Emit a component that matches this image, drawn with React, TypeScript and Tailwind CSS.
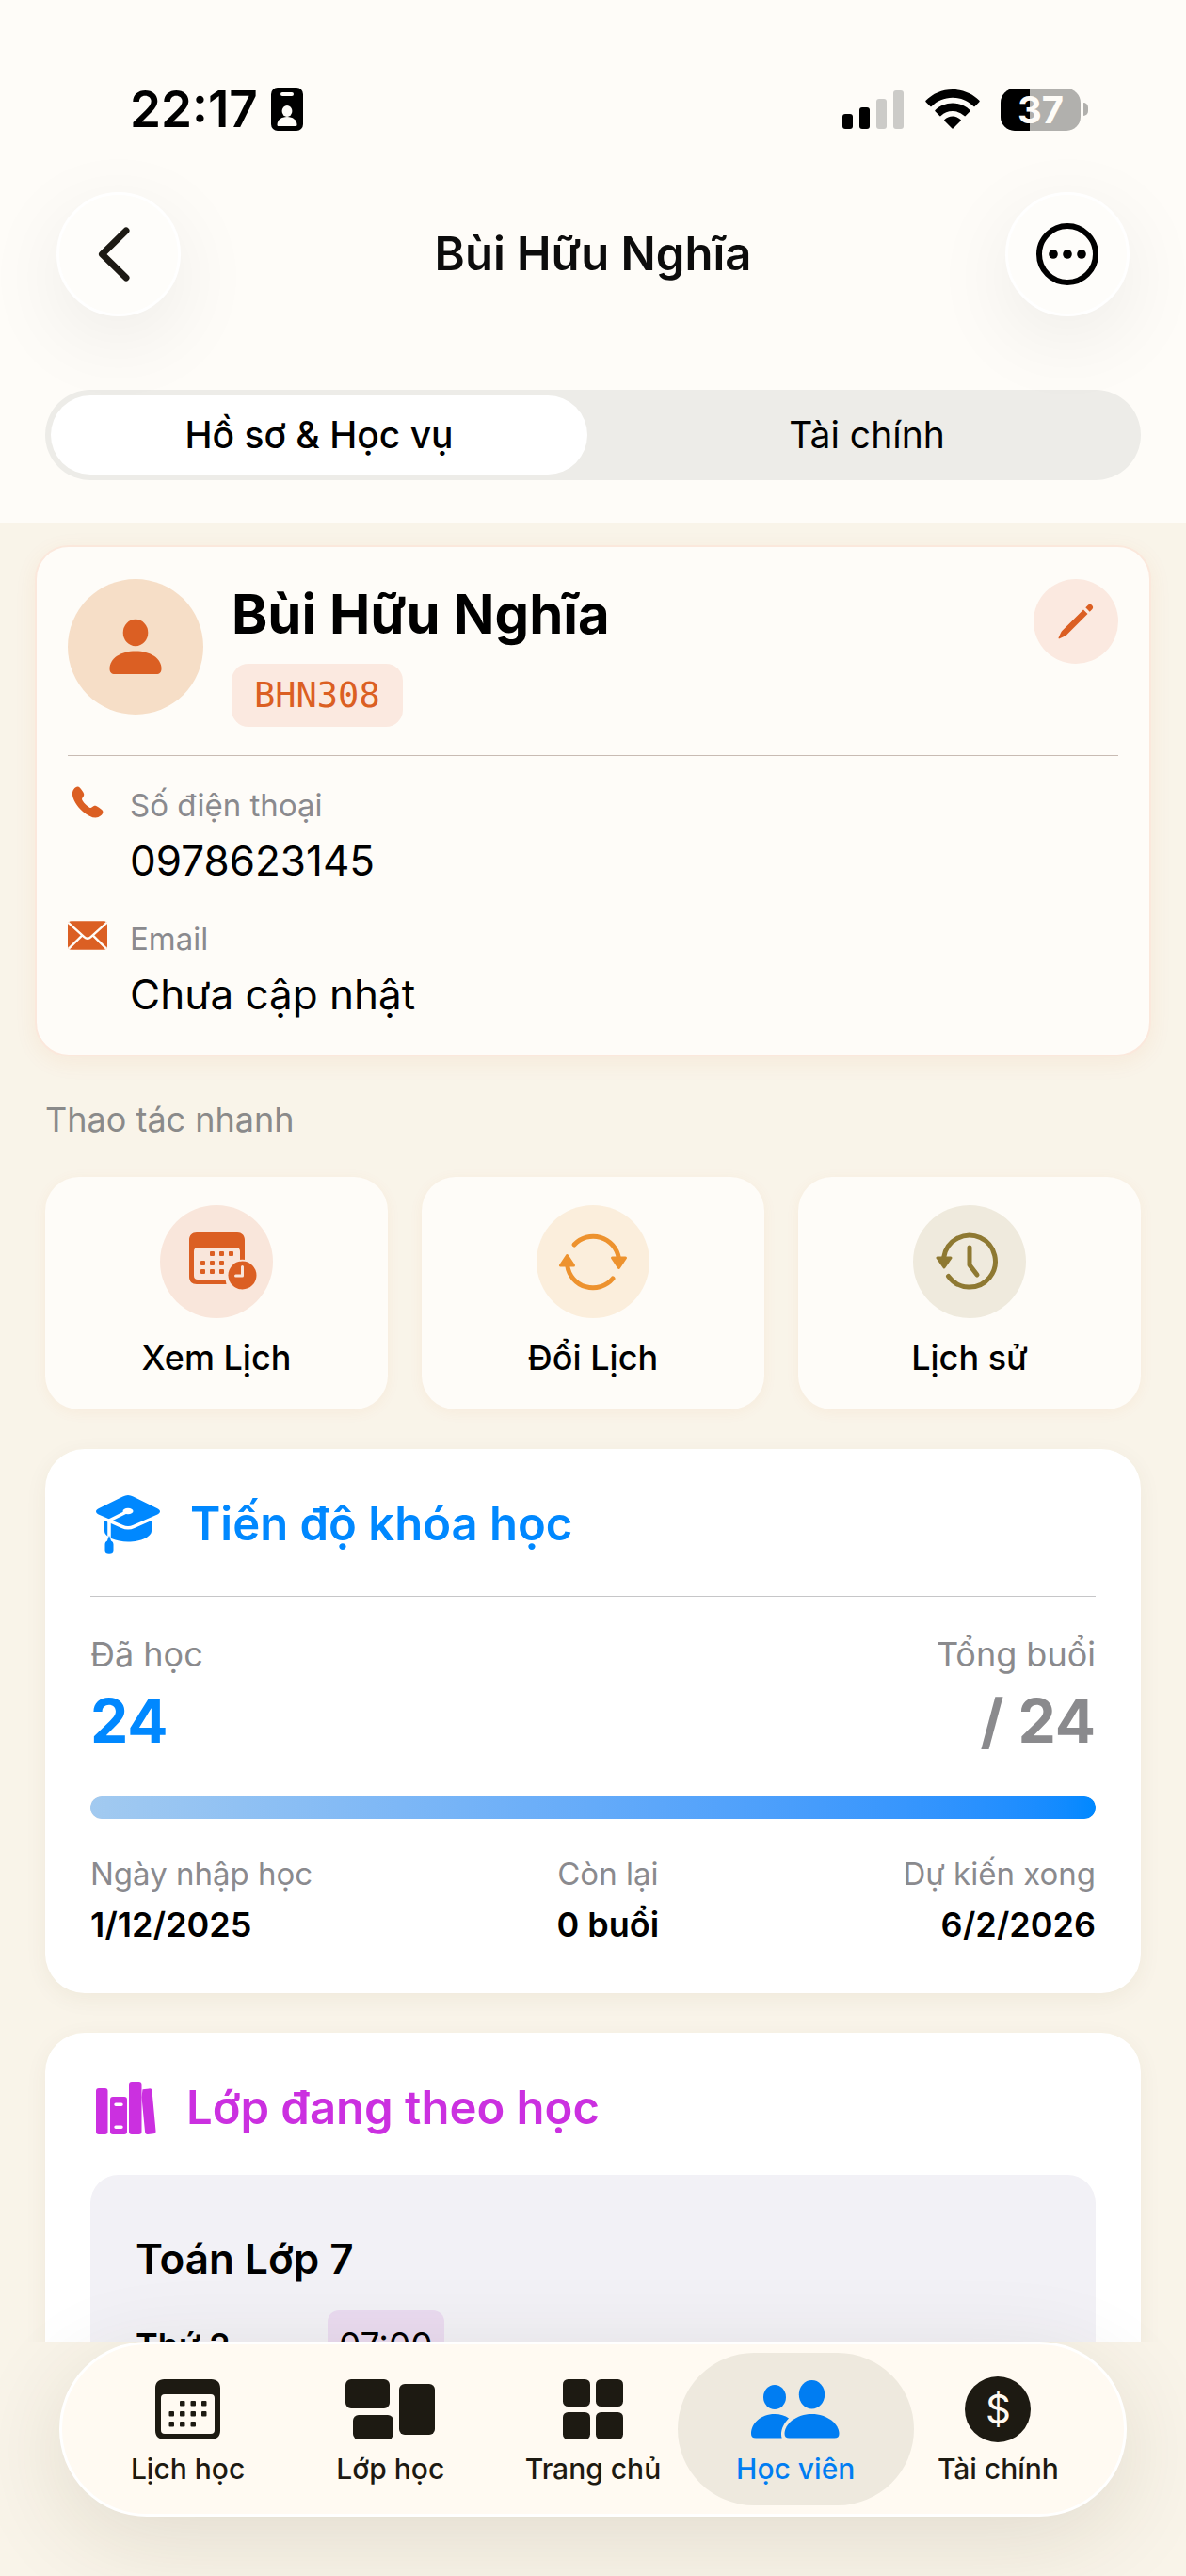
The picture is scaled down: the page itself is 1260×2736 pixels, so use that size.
import { useState } from "react";
import type { ReactNode } from "react";

type Tab = "profile" | "finance";

type QuickAction = {
  label: string;
  tint: string;
  icon: ReactNode;
};

type NavItem = {
  label: string;
  href: string;
  icon: ReactNode;
};

function BadgeIcon() {
  return (
    <svg width="34" height="46" viewBox="0 0 34 46" aria-hidden="true">
      <rect width="34" height="46" rx="7" fill="#000" />
      <rect x="10" y="5" width="14" height="4" rx="2" fill="#fefcf8" />
      <ellipse cx="17" cy="25" rx="5.4" ry="6" fill="#fefcf8" />
      <path d="M6.5 39.5c0-5 4.5-8.5 10.500-8.500s10.500 3.500 10.500 8.500c0 1-.6 1.500-1.500 1.500H8c-.9 0-1.500-.5-1.500-1.500z" fill="#fefcf8" />
    </svg>
  );
}

function SignalIcon() {
  return (
    <svg width="66" height="42" viewBox="0 0 66 42" aria-hidden="true">
      <rect x="0" y="26" width="11" height="16" rx="3" fill="#000" />
      <rect x="18" y="19" width="11" height="23" rx="3" fill="#000" />
      <rect x="36" y="10" width="11" height="32" rx="3" fill="#cccbc8" />
      <rect x="54" y="1" width="11" height="41" rx="3" fill="#cccbc8" />
    </svg>
  );
}

function WifiIcon() {
  return (
    <svg width="58" height="42" viewBox="0 0 58 42" aria-hidden="true" fill="#000">
      <path d="M29 0C17.800 0 7.800 4.500.6 11.800a1 1 0 0 0 0 1.400l4.700 4.700c.4.400 1 .4 1.400 0C12.400 12.200 20.200 8.700 29 8.700s16.600 3.500 22.300 9.200c.4.400 1 .4 1.400 0l4.700-4.700a1 1 0 0 0 0-1.400C50.200 4.500 40.200 0 29 0z" />
      <path d="M29 14.500c-7.200 0-13.700 2.800-18.500 7.400a1 1 0 0 0 0 1.400l4.700 4.800c.4.400 1 .4 1.400 0a17.800 17.800 0 0 1 24.800 0c.4.400 1 .4 1.400 0l4.700-4.800a1 1 0 0 0 0-1.400c-4.800-4.600-11.300-7.400-18.500-7.400z" />
      <path d="M29 28.500c-3.300 0-6.300 1.300-8.500 3.400a1 1 0 0 0 0 1.500l7.700 7.900c.5.500 1.100.5 1.600 0l7.700-7.900a1 1 0 0 0 0-1.500c-2.200-2.100-5.200-3.400-8.500-3.400z" />
    </svg>
  );
}

function Battery({ level }: { level: number }) {
  return (
    <div className="flex items-center gap-[3px]">
      <div className="relative flex h-[45px] w-[85px] items-center justify-center rounded-[15px] bg-[#b1b0ad]">
        <div className="absolute inset-y-0 left-0 rounded-l-[15px] bg-black" style={{ width: `${level}%` }} />
        <span className="relative text-[40px] leading-[45px] font-bold text-[#fefcf8]">{level}</span>
      </div>
      <div className="h-[14px] w-[5px] rounded-r-full bg-[#b1b0ad]" />
    </div>
  );
}

function PersonIcon() {
  return (
    <svg width="56" height="60" viewBox="0 0 56 60" fill="#db5f23" aria-hidden="true">
      <ellipse cx="28" cy="15" rx="13.300" ry="14.200" />
      <path d="M0.500 53C0.500 42.500 12 34.500 28 34.500S55.500 42.500 55.500 53c0 4-1.800 6-5.500 6H6c-3.700 0-5.500-2-5.500-6z" />
    </svg>
  );
}

function PencilIcon() {
  return (
    <svg width="38" height="38" viewBox="0 0 38 38" fill="#db5f23" aria-hidden="true">
      <path d="M27 6.500 31.500 11 9 33.500c-.6.600-1.200 1-2 1.300L1.600 37.300c-.8.300-1.300-.2-1-1L3 31c.3-.8.700-1.400 1.300-2z" />
      <path d="m29.300 4.300 2.500-2.500c1.200-1.200 2.900-1.300 4-.2l.6.600c1.100 1.100 1 2.800-.2 4l-2.500 2.500z" />
    </svg>
  );
}

function PhoneIcon() {
  return (
    <svg width="34" height="34" viewBox="0 0 34 34" fill="#db5f23" aria-hidden="true">
      <path d="M2.400 3.200C4.300.9 6.800-.4 8.700 1.600c1.700 1.900 3.700 4.600 4.300 6.200.6 1.900-.2 3-1.300 4.400-.9 1.100-.8 1.800-.1 3 1.800 3 4.300 5.400 7.200 7.200 1.200.7 1.900.8 3-.1 1.400-1.100 2.500-1.900 4.400-1.300 1.600.6 4.300 2.600 6.200 4.300 2 1.900.7 4.400-1.600 6.300-4.500 3.900-11.500 1.500-18.800-4.700C3.600 19.600-1.900 8.600 2.400 3.200z" />
    </svg>
  );
}

function MailIcon() {
  return (
    <svg width="43" height="31" viewBox="0 0 43 31" aria-hidden="true">
      <rect width="43" height="31" rx="4" fill="#db5f23" />
      <path d="M0.500 1.500 17.800 17.200c2.300 2.100 5.100 2.100 7.400 0L42.500 1.500M1 30l14.500-14.300M42 30 27.500 15.700" fill="none" stroke="#fefcf8" strokeWidth="2.400" />
    </svg>
  );
}

// The calendar page is centred in its circle, the clock hangs over the corner
function CalendarClockIcon() {
  return (
    <svg width="86" height="62" viewBox="-14 0 86 62" fill="#db5f23" aria-hidden="true">
      <path fillRule="evenodd" d="M8 0h43c5 0 8 3 8 8v22a19 19 0 0 0-5-.5V20c0-2.500-1.500-4-4-4H9c-2.500 0-4 1.500-4 4v26c0 2.500 1.500 4 4 4h29.500l1 5H8c-5 0-8-3-8-8V8c0-5 3-8 8-8z" />
      {[22, 32, 42].map((x) => <rect key={`a${x}`} x={x} y="20" width="5" height="5" rx="1" />)}
      {[12, 22, 32].map((x) => <rect key={`b${x}`} x={x} y="30" width="5" height="5" rx="1" />)}
      {[12, 22, 32].map((x) => <rect key={`c${x}`} x={x} y="39" width="5" height="5" rx="1" />)}
      <circle cx="56.500" cy="45.500" r="16.800" fill="#f9e6db" />
      <circle cx="56.500" cy="45.500" r="15" />
      <path d="M56.500 36.500v9.500h-7" fill="none" stroke="#f9e6db" strokeWidth="3" strokeLinecap="round" strokeLinejoin="round" />
    </svg>
  );
}

function SwapIcon() {
  return (
    <svg width="72" height="62" viewBox="0 0 72 62" fill="none" stroke="#ed922e" strokeWidth="5" strokeLinecap="round" aria-hidden="true">
      <path d="M16 13A27.500 27.500 0 0 1 63.300 27" />
      <path d="M8.700 35A27.500 27.500 0 0 0 57 49" />
      <path d="M56.500 27h14L63.500 37.500z" fill="#ed922e" strokeWidth="3" strokeLinejoin="round" />
      <path d="M1.500 35h14L8.500 24.500z" fill="#ed922e" strokeWidth="3" strokeLinejoin="round" />
    </svg>
  );
}

function HistoryIcon() {
  return (
    <svg width="72" height="62" viewBox="0 0 72 62" fill="none" stroke="#8e7932" strokeWidth="5" strokeLinecap="round" strokeLinejoin="round" aria-hidden="true">
      <path d="M8.800 26A27.500 27.500 0 1 1 13.500 46.500" />
      <path d="M2 27h14L9 37z" fill="#8e7932" strokeWidth="3" />
      <path d="M36 16v18.500l8 10.500" />
    </svg>
  );
}

function GradCapIcon() {
  return (
    <svg width="68" height="62" viewBox="0 0 68 62" fill="#0088ff" aria-hidden="true">
      <path d="M9 24h50v14c0 6-11 11.500-25 11.500-6.500 0-12.500-1.200-17-3.200C12 44 9 41.500 9 38z" />
      <path d="M28.500 1.600c3.700-2 7.300-2 11 0l25.800 12.600c3.600 1.800 3.600 4.400 0 6.200L39.500 31.800c-3.700 1.700-7.300 1.700-11 0L2.700 20.400c-3.600-1.800-3.600-4.400 0-6.200z" stroke="#fff" strokeWidth="7" paintOrder="stroke" strokeLinejoin="round" />
      <path d="M32 18 14 27v18" fill="none" stroke="#fff" strokeWidth="3.500" strokeLinecap="round" strokeLinejoin="round" />
      <ellipse cx="34" cy="17" rx="5.500" ry="3.300" fill="#fff" />
      <path d="M14 43c1.200 2.500 1.500 3.500 2 5.500 1.700.8 2.500 2 2.500 4v6c0 2-1.500 3.300-4.500 3.300s-4.500-1.300-4.500-3.300v-6c0-2 .8-3.200 2.500-4 .5-2 .8-3 2-5.500z" />
    </svg>
  );
}

function BooksIcon() {
  return (
    <svg width="64" height="56" viewBox="0 0 64 56" fill="#cb30e0" aria-hidden="true">
      <rect x="0" y="7" width="12.500" height="49" rx="3" />
      <path fillRule="evenodd" d="M18 16h12a3 3 0 0 1 3 3v34a3 3 0 0 1-3 3H18a3 3 0 0 1-3-3V19a3 3 0 0 1 3-3zm3 6.500a1.700 1.700 0 0 0 0 3.400h6a1.700 1.700 0 0 0 0-3.400zm0 24a1.700 1.700 0 0 0 0 3.400h6a1.700 1.700 0 0 0 0-3.400z" />
      <rect x="35" y="0" width="13.500" height="56" rx="3" />
      <path d="m49.500 8.200 7-.8c1.800-.2 2.800.6 3 2.300l4 42.500c.2 1.800-.6 2.800-2.400 3l-6 .7c-1.800.2-2.800-.6-3-2.300l-3.600-37z" />
    </svg>
  );
}

function CalendarIcon() {
  return (
    <svg width="69" height="64" viewBox="0 0 69 64" fill="#1d1a12" aria-hidden="true">
      <path fillRule="evenodd" d="M9.500 0h50c6 0 9.500 3.500 9.500 9.500v45c0 6-3.500 9.500-9.500 9.500h-50C3.500 64 0 60.500 0 54.500v-45C0 3.500 3.500 0 9.500 0zM10 16c-2.700 0-4 1.300-4 4v34c0 2.700 1.300 4 4 4h49c2.700 0 4-1.300 4-4V20c0-2.700-1.300-4-4-4z" />
      {[26, 37.500, 49].map((x) => <rect key={`a${x}`} x={x} y="23" width="5.500" height="5.500" rx="1" />)}
      {[14.500, 26, 37.500, 49].map((x) => <rect key={`b${x}`} x={x} y="34" width="5.500" height="5.500" rx="1" />)}
      {[14.500, 26, 37.500].map((x) => <rect key={`c${x}`} x={x} y="45" width="5.500" height="5.500" rx="1" />)}
    </svg>
  );
}

function ClassIcon() {
  return (
    <svg width="95" height="64" viewBox="0 0 95 64" fill="#1d1a12" aria-hidden="true">
      <rect x="0" y="0" width="47" height="31" rx="6" />
      <rect x="8" y="38" width="43" height="26" rx="6" />
      <rect x="57" y="5" width="38" height="54" rx="6" />
    </svg>
  );
}

function GridIcon() {
  return (
    <svg width="64" height="64" viewBox="0 0 64 64" fill="#1d1a12" aria-hidden="true">
      <rect x="0" y="0" width="29" height="29" rx="5.500" />
      <rect x="35" y="0" width="29" height="29" rx="5.500" />
      <rect x="0" y="35" width="29" height="29" rx="5.500" />
      <rect x="35" y="35" width="29" height="29" rx="5.500" />
    </svg>
  );
}

function PeopleIcon() {
  return (
    <svg width="94" height="62" viewBox="0 0 94 62" fill="#007df2" aria-hidden="true">
      <ellipse cx="25" cy="18" rx="12" ry="13" />
      <path d="M25 36c6 0 11 1.500 15 4.500-5 5-8 11-8 17 0 1.500.2 2.900.7 4H5c-3.300 0-5-1.500-5-4.500C0 46 10 36 25 36z" />
      <ellipse cx="64.500" cy="15.300" rx="13.700" ry="15.200" />
      <path d="M64.500 36C81 36 93.500 46.500 93.500 57c0 3-1.700 4.500-5 4.500h-48c-3.300 0-5-1.500-5-4.500C35.500 46.500 48 36 64.500 36z" />
    </svg>
  );
}

function DollarIcon() {
  return (
    <span className="flex size-[70px] items-center justify-center rounded-full bg-[#1d1a12] text-[42px] leading-[70px] text-[#fffaf2]">
      $
    </span>
  );
}

const ACTIONS: QuickAction[] = [
  { label: "Xem Lịch", tint: "bg-[#f9e6db]", icon: <CalendarClockIcon /> },
  { label: "Đổi Lịch", tint: "bg-[#fbeedc]", icon: <SwapIcon /> },
  { label: "Lịch sử", tint: "bg-[#efeadd]", icon: <HistoryIcon /> },
];

const NAV_ITEMS: NavItem[] = [
  { label: "Lịch học", href: "#schedule", icon: <CalendarIcon /> },
  { label: "Lớp học", href: "#classes", icon: <ClassIcon /> },
  { label: "Trang chủ", href: "#home", icon: <GridIcon /> },
  { label: "Học viên", href: "#students", icon: <PeopleIcon /> },
  { label: "Tài chính", href: "#finance", icon: <DollarIcon /> },
];

const student = {
  name: "Bùi Hữu Nghĩa",
  code: "BHN308",
  phone: "0978623145",
  email: "Chưa cập nhật",
  done: 24,
  total: 24,
  startDate: "1/12/2025",
  remaining: "0 buổi",
  endDate: "6/2/2026",
};

function ContactRow({ icon, label, value }: { icon: ReactNode; label: string; value: string }) {
  return (
    <div className="flex items-start gap-6">
      <div className="flex h-[31px] w-[42px] items-center justify-center">{icon}</div>
      <dl>
        <dt className="text-[33px] leading-[39px] text-[#8a8a8e]">{label}</dt>
        <dd className="mt-3 text-[44px] leading-[54px]">{value}</dd>
      </dl>
    </div>
  );
}

export default function App() {
  const [tab, setTab] = useState<Tab>("profile");
  const [activeNav, setActiveNav] = useState("Học viên");

  const tabClass = (value: Tab) =>
    tab === value
      ? "rounded-full bg-white font-medium"
      : "rounded-full font-normal";

  return (
    <div className="flex h-screen flex-col bg-[#f9f4e9] font-['Inter','Noto_Sans',sans-serif] text-black">
      {/* Status bar + title */}
      <header className="bg-[#fefcf8] pb-[45px]">
        <div className="flex items-center justify-between pt-[90px] pr-[104px] pl-[138px]">
          <div className="flex items-center gap-[14px]">
            <span className="text-[53px] leading-[52px] font-semibold">22:17</span>
            <BadgeIcon />
          </div>
          <div className="flex items-center gap-[22px]">
            <SignalIcon />
            <WifiIcon />
            <Battery level={37} />
          </div>
        </div>

        <div className="mt-[62px] flex items-center justify-between px-[60px]">
          <button aria-label="Quay lại" className="flex size-[132px] items-center justify-center rounded-full border-[3px] border-white bg-[#fefdfa] shadow-[0_24px_90px_rgba(0,0,0,0.07)]">
            <svg width="34" height="58" viewBox="0 0 34 58" fill="none" stroke="#1d1a14" strokeWidth="7" strokeLinecap="round" strokeLinejoin="round" className="mr-[10px]" aria-hidden="true">
              <path d="M30 4 4.500 29 30 54" />
            </svg>
          </button>
          <h1 className="text-[49px] leading-[60px] font-semibold text-[#0c0c0c]">{student.name}</h1>
          <button aria-label="Tùy chọn" className="flex size-[132px] items-center justify-center rounded-full border-[3px] border-white bg-[#fefdfa] shadow-[0_24px_90px_rgba(0,0,0,0.07)]">
            <svg width="66" height="66" viewBox="0 0 66 66" aria-hidden="true">
              <circle cx="33" cy="33" r="30" fill="none" stroke="#000" strokeWidth="6" />
              <circle cx="18" cy="33" r="4.800" />
              <circle cx="33" cy="33" r="4.800" />
              <circle cx="48" cy="33" r="4.800" />
            </svg>
          </button>
        </div>

        <div role="tablist" className="mx-12 mt-[78px] grid h-24 grid-cols-2 gap-3 rounded-full bg-[#edece8] p-[6px] text-[39px]">
          <button role="tab" aria-selected={tab === "profile"} onClick={() => setTab("profile")} className={tabClass("profile")}>
            Hồ sơ &amp; Học vụ
          </button>
          <button role="tab" aria-selected={tab === "finance"} onClick={() => setTab("finance")} className={tabClass("finance")}>
            Tài chính
          </button>
        </div>
      </header>

      <main className="min-h-0 flex-1 overflow-hidden pt-6">
        {/* Profile */}
        <section className="mx-[37px] rounded-[36px] border-2 border-[#fbe8dc] bg-[#fefcf8] px-[33px] pt-[34px] pb-[37px] shadow-[0_6px_24px_rgba(219,95,35,0.07)]">
          <div className="flex items-start">
            <div className="flex size-36 items-center justify-center rounded-full bg-[#f6dec7]">
              <PersonIcon />
            </div>
            <div className="ml-[30px] flex-1">
              <h2 className="text-[58px] leading-[74px] font-bold">{student.name}</h2>
              <span className="mt-4 inline-block rounded-[18px] bg-[#fbe9e0] px-6 font-['DejaVu_Sans_Mono',monospace] text-[37px] leading-[67px] text-[#db5f23]">
                {student.code}
              </span>
            </div>
            <button aria-label="Chỉnh sửa" className="flex size-[90px] items-center justify-center rounded-full bg-[#fbe9e0]">
              <PencilIcon />
            </button>
          </div>
          <hr className="mt-[30px] border-[#c8bbb3]" />
          <div className="mt-[33px] flex flex-col gap-[37px]">
            <ContactRow icon={<PhoneIcon />} label="Số điện thoại" value={student.phone} />
            <ContactRow icon={<MailIcon />} label="Email" value={student.email} />
          </div>
        </section>

        {/* Quick actions */}
        <section className="mx-12 mt-[45px]">
          <h3 className="text-[36px] leading-[45px] text-[#8a8a8a]">Thao tác nhanh</h3>
          <div className="mt-[38px] grid grid-cols-3 gap-9">
            {ACTIONS.map((action) => (
              <button key={action.label} className="flex flex-col items-center rounded-[36px] bg-[#fefcf8] pt-[30px] pb-[33px] shadow-[0_3px_15px_rgba(219,95,35,0.06)]">
                <span className={`flex size-[120px] items-center justify-center rounded-full ${action.tint}`}>{action.icon}</span>
                <span className="mt-5 text-[36px] leading-[44px] font-medium">{action.label}</span>
              </button>
            ))}
          </div>
        </section>

        {/* Course progress */}
        <section className="mx-12 mt-[42px] rounded-[42px] bg-white px-12 pt-12 pb-[51px] shadow-[0_6px_24px_rgba(80,60,0,0.06)]">
          <div className="flex items-center gap-8 pl-[6px]">
            <GradCapIcon />
            <h3 className="text-[49px] leading-[64px] font-semibold text-[#0088ff]">Tiến độ khóa học</h3>
          </div>
          <hr className="mt-[44px] border-[#c6c6c8]" />
          <div className="mt-10 flex justify-between text-[#8a8a8d]">
            <div>
              <p className="text-[36px] leading-[42px]">Đã học</p>
              <p className="mt-[11px] text-[64px] leading-[78px] font-bold text-[#0088ff]">{student.done}</p>
            </div>
            <div className="text-right">
              <p className="text-[36px] leading-[42px]">Tổng buổi</p>
              <p className="mt-[11px] text-[64px] leading-[78px] font-bold">/ {student.total}</p>
            </div>
          </div>
          <div role="progressbar" aria-label="Tiến độ" aria-valuenow={student.done} aria-valuemax={student.total} className="mt-[41px] h-6 overflow-hidden rounded-full bg-[#e5e5ea]">
            <div className="h-full rounded-full bg-linear-to-r from-[#a2caf0] to-[#0088ff]" style={{ width: `${(student.done / student.total) * 100}%` }} />
          </div>
          <dl className="mt-[38px] flex justify-between">
            <div>
              <dt className="text-[33px] leading-[40px] text-[#8a8a8e]">Ngày nhập học</dt>
              <dd className="mt-3 text-[36px] leading-[44px] font-semibold">{student.startDate}</dd>
            </div>
            <div className="text-center">
              <dt className="text-[33px] leading-[40px] text-[#8a8a8e]">Còn lại</dt>
              <dd className="mt-3 text-[36px] leading-[44px] font-semibold">{student.remaining}</dd>
            </div>
            <div className="text-right">
              <dt className="text-[33px] leading-[40px] text-[#8a8a8e]">Dự kiến xong</dt>
              <dd className="mt-3 text-[36px] leading-[44px] font-semibold">{student.endDate}</dd>
            </div>
          </dl>
        </section>

        {/* Current classes */}
        <section className="mx-12 mt-[42px] rounded-[42px] bg-white p-12 shadow-[0_6px_24px_rgba(80,60,0,0.06)]">
          <div className="flex items-center gap-8 pl-[6px]">
            <BooksIcon />
            <h3 className="text-[49px] leading-[64px] font-semibold text-[#cb30e0]">Lớp đang theo học</h3>
          </div>
          <div className="mt-[39px] rounded-[30px] bg-[#f2f1f6] px-12 pt-[62px] pb-12">
            <h4 className="text-[44px] leading-[54px] font-semibold">Toán Lớp 7</h4>
            <div className="mt-7 flex items-center">
              <span className="w-[204px] text-[36px] leading-[44px] font-semibold">Thứ 2</span>
              <span className="rounded-[12px] bg-[#eadbf0] px-3 text-[37px] leading-[74px]">07:00</span>
            </div>
          </div>
        </section>
      </main>

      {/* Bottom nav */}
      <footer className="relative z-10 px-[63px] pb-[63px]">
        <nav className="grid h-[186px] grid-cols-5 rounded-full border-[3px] border-white bg-[#fffaf2] px-[26px] py-[9px] shadow-[0_24px_100px_rgba(60,50,20,0.12)]">
          {NAV_ITEMS.map((item) => (
            <a
              key={item.label}
              href={item.href}
              onClick={() => setActiveNav(item.label)}
              className={
                activeNav === item.label
                  ? "-mx-[18px] flex flex-col items-center rounded-full bg-[#eee9de] pt-[22px] text-[#007df2]"
                  : "flex flex-col items-center pt-[22px] text-[#1d1a12]"
              }
            >
              <span className="flex h-[76px] items-center justify-center">{item.icon}</span>
              <span className="mt-[5px] text-[30px] leading-[40px] font-medium whitespace-nowrap">{item.label}</span>
            </a>
          ))}
        </nav>
      </footer>
    </div>
  );
}
